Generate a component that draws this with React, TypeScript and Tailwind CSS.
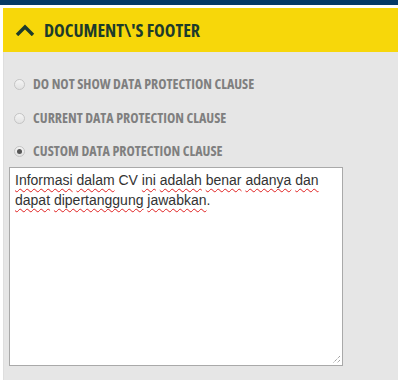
import React, { useState } from 'react';

const OPTIONS = [
  { id: 'none', label: 'DO NOT SHOW DATA PROTECTION CLAUSE' },
  { id: 'current', label: 'CURRENT DATA PROTECTION CLAUSE' },
  { id: 'custom', label: 'CUSTOM DATA PROTECTION CLAUSE' },
];

const WORDS: [string, boolean][] = [
  ['Informasi', true],
  ['dalam', true],
  ['CV', false],
  ['ini', true],
  ['adalah', true],
  ['benar', true],
  ['adanya', true],
  ['dan', true],
  ['dapat', true],
  ['dipertanggung', true],
  ['jawabkan', true],
];

function Radio({ checked }: { checked: boolean }) {
  return (
    <span className="w-[11px] h-[11px] rounded-full border border-[#c4c4c4] bg-gradient-to-b from-[#f4f4f4] to-[#e2e2e2] flex items-center justify-center shrink-0">
      {checked && <span className="w-[5px] h-[5px] rounded-full bg-[#555]" />}
    </span>
  );
}

export default function App() {
  const [selected, setSelected] = useState('custom');

  return (
    <div className="bg-white w-[402px] h-[380px] overflow-hidden">
      {/* top bar */}
      <div className="h-[5px] w-[398px] bg-[#063a66]" />

      <div className="mt-[3px] ml-[3px] w-[395px]">
        {/* Section header */}
        <div className="h-[44px] bg-[#f7d70a] flex items-center pl-[12px] gap-[9px]">
          <svg width="20" height="12" viewBox="0 0 20 12" className="shrink-0">
            <path d="M2 11 L10 3 L18 11" fill="none" stroke="#1d3b2b" strokeWidth="3.4" />
          </svg>
          <span className="font-['Open_Sans',sans-serif] font-stretch-condensed text-[18px] font-bold text-[#1d3b2b] leading-none">
            DOCUMENT\'S FOOTER
          </span>
        </div>

        {/* Body */}
        <div className="bg-[#e6e6e6] h-[328px] pt-[15px] border-l-[1px] border-[#dedede]">
          {OPTIONS.map((opt, i) => (
            <label
              key={opt.id}
              onClick={() => setSelected(opt.id)}
              className={`flex items-center gap-[8px] pl-[10px] cursor-pointer ${i === 2 ? 'h-[32px]' : 'h-[34px]'}`}
            >
              <Radio checked={selected === opt.id} />
              <span className="font-['Open_Sans',sans-serif] font-stretch-condensed text-[14px] font-bold text-[#7f7f7f] leading-none">
                {opt.label}
              </span>
            </label>
          ))}

          {/* Text area */}
          <div className="relative ml-[5px] w-[334px] h-[199px] bg-white border border-[#a9a9a9] pl-[5px] pt-[2px] pr-[4px]">
            <p className="font-['Liberation_Sans',Arial,sans-serif] text-[14px] leading-[20px] text-[#333]">
              {WORDS.map(([w, wrong], i) => (
                <React.Fragment key={i}>
                  <span className={wrong ? 'underline decoration-wavy decoration-[#e02020] decoration-[1px] underline-offset-[3px]' : ''}>
                    {w}
                  </span>
                  {i < WORDS.length - 1 ? ' ' : '.'}
                </React.Fragment>
              ))}
            </p>
            <svg width="10" height="10" viewBox="0 0 10 10" className="absolute right-[1px] bottom-[1px]">
              <path d="M9 2 L2 9 M9 6 L6 9" stroke="#7a7a7a" strokeWidth="1" strokeDasharray="1 1" />
            </svg>
          </div>
        </div>
      </div>
    </div>
  );
}
